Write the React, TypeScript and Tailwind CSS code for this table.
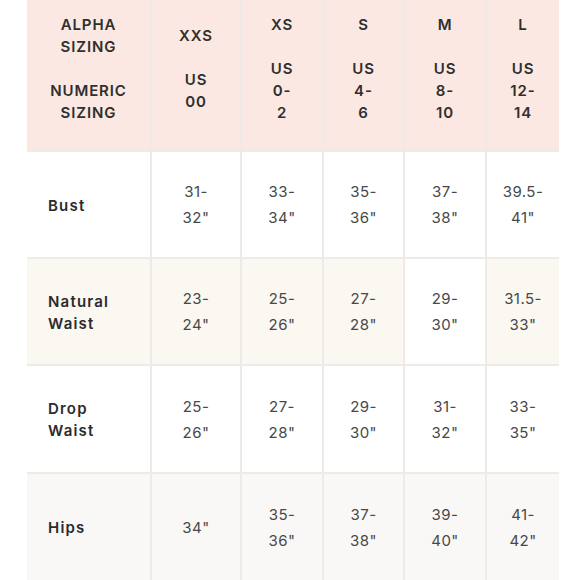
import React from "react";

const cols = ["XXS", "XS", "S", "M", "L"];
const numeric = [["US", "00"], ["US", "0-", "2"], ["US", "4-", "6"], ["US", "8-", "10"], ["US", "12-", "14"]];

type Row = { label: string[]; values: string[][]; bgs: string[]; h: string };

const rows: Row[] = [
  {
    label: ["Bust"],
    values: [["31-", '32"'], ["33-", '34"'], ["35-", '36"'], ["37-", '38"'], ["39.5-", '41"']],
    bgs: ["bg-white", "bg-white", "bg-white", "bg-white", "bg-white", "bg-white"],
    h: "h-[105px]",
  },
  {
    label: ["Natural", "Waist"],
    values: [["23-", '24"'], ["25-", '26"'], ["27-", '28"'], ["29-", '30"'], ["31.5-", '33"']],
    bgs: ["bg-[#fbf7f1]", "bg-[#fbf7f1]", "bg-[#fbf7f1]", "bg-[#fbf7f1]", "bg-white", "bg-[#fbf7f1]"],
    h: "h-[105px]",
  },
  {
    label: ["Drop", "Waist"],
    values: [["25-", '26"'], ["27-", '28"'], ["29-", '30"'], ["31-", '32"'], ["33-", '35"']],
    bgs: ["bg-white", "bg-white", "bg-white", "bg-white", "bg-white", "bg-white"],
    h: "h-[106px]",
  },
  {
    label: ["Hips"],
    values: [['34"'], ["35-", '36"'], ["37-", '38"'], ["39-", '40"'], ["41-", '42"']],
    bgs: ["bg-[#faf8f6]", "bg-[#faf8f6]", "bg-[#faf8f6]", "bg-[#faf8f6]", "bg-[#faf8f6]", "bg-[#faf8f6]"],
    h: "h-[106px]",
  },
];

export default function App() {
  return (
    <div className="w-[580px] h-[580px] overflow-hidden bg-white pl-[27px] font-['Inter','Liberation_Sans',sans-serif]">
      <div className="grid w-[532px] grid-cols-[123px_88px_80px_79px_80px_72px] gap-[2px] bg-[#eeeae8]">
        {/* header */}
        <div className="h-[150px] bg-[#fce8e2] flex flex-col items-center justify-center pb-[13px] text-[15px] leading-[22px] font-semibold tracking-[0.06em] text-[#2f2f2f] text-center">
          <span>ALPHA</span>
          <span>SIZING</span>
          <span>&nbsp;</span>
          <span>NUMERIC</span>
          <span>SIZING</span>
        </div>
        {cols.map((c, i) => (
          <div
            key={c}
            className="h-[150px] bg-[#fce8e2] flex flex-col items-center justify-center pb-[13px] text-[15px] leading-[22px] font-semibold tracking-[0.06em] text-[#2f2f2f] text-center"
          >
            <span>{c}</span>
            <span>&nbsp;</span>
            {numeric[i].map((n, j) => (
              <span key={j}>{n}</span>
            ))}
          </div>
        ))}
        {rows.map((r) => (
          <React.Fragment key={r.label.join(" ")}>
            <div className={`${r.h} ${r.bgs[0]} flex flex-col justify-center pl-[21px] pt-[2px] text-[15px] leading-[22px] font-semibold tracking-[0.08em] text-[#2b2b2b]`}>
              {r.label.map((l) => (
                <span key={l}>{l}</span>
              ))}
            </div>
            {r.values.map((v, i) => (
              <div
                key={i}
                className={`${r.h} ${r.bgs[i + 1]} flex flex-col items-center justify-center pt-[1px] text-[15px] leading-[26px] font-normal tracking-[0.03em] text-[#484848] text-center`}
              >
                {v.map((t, j) => (
                  <span key={j}>{t}</span>
                ))}
              </div>
            ))}
          </React.Fragment>
        ))}
      </div>
    </div>
  );
}
